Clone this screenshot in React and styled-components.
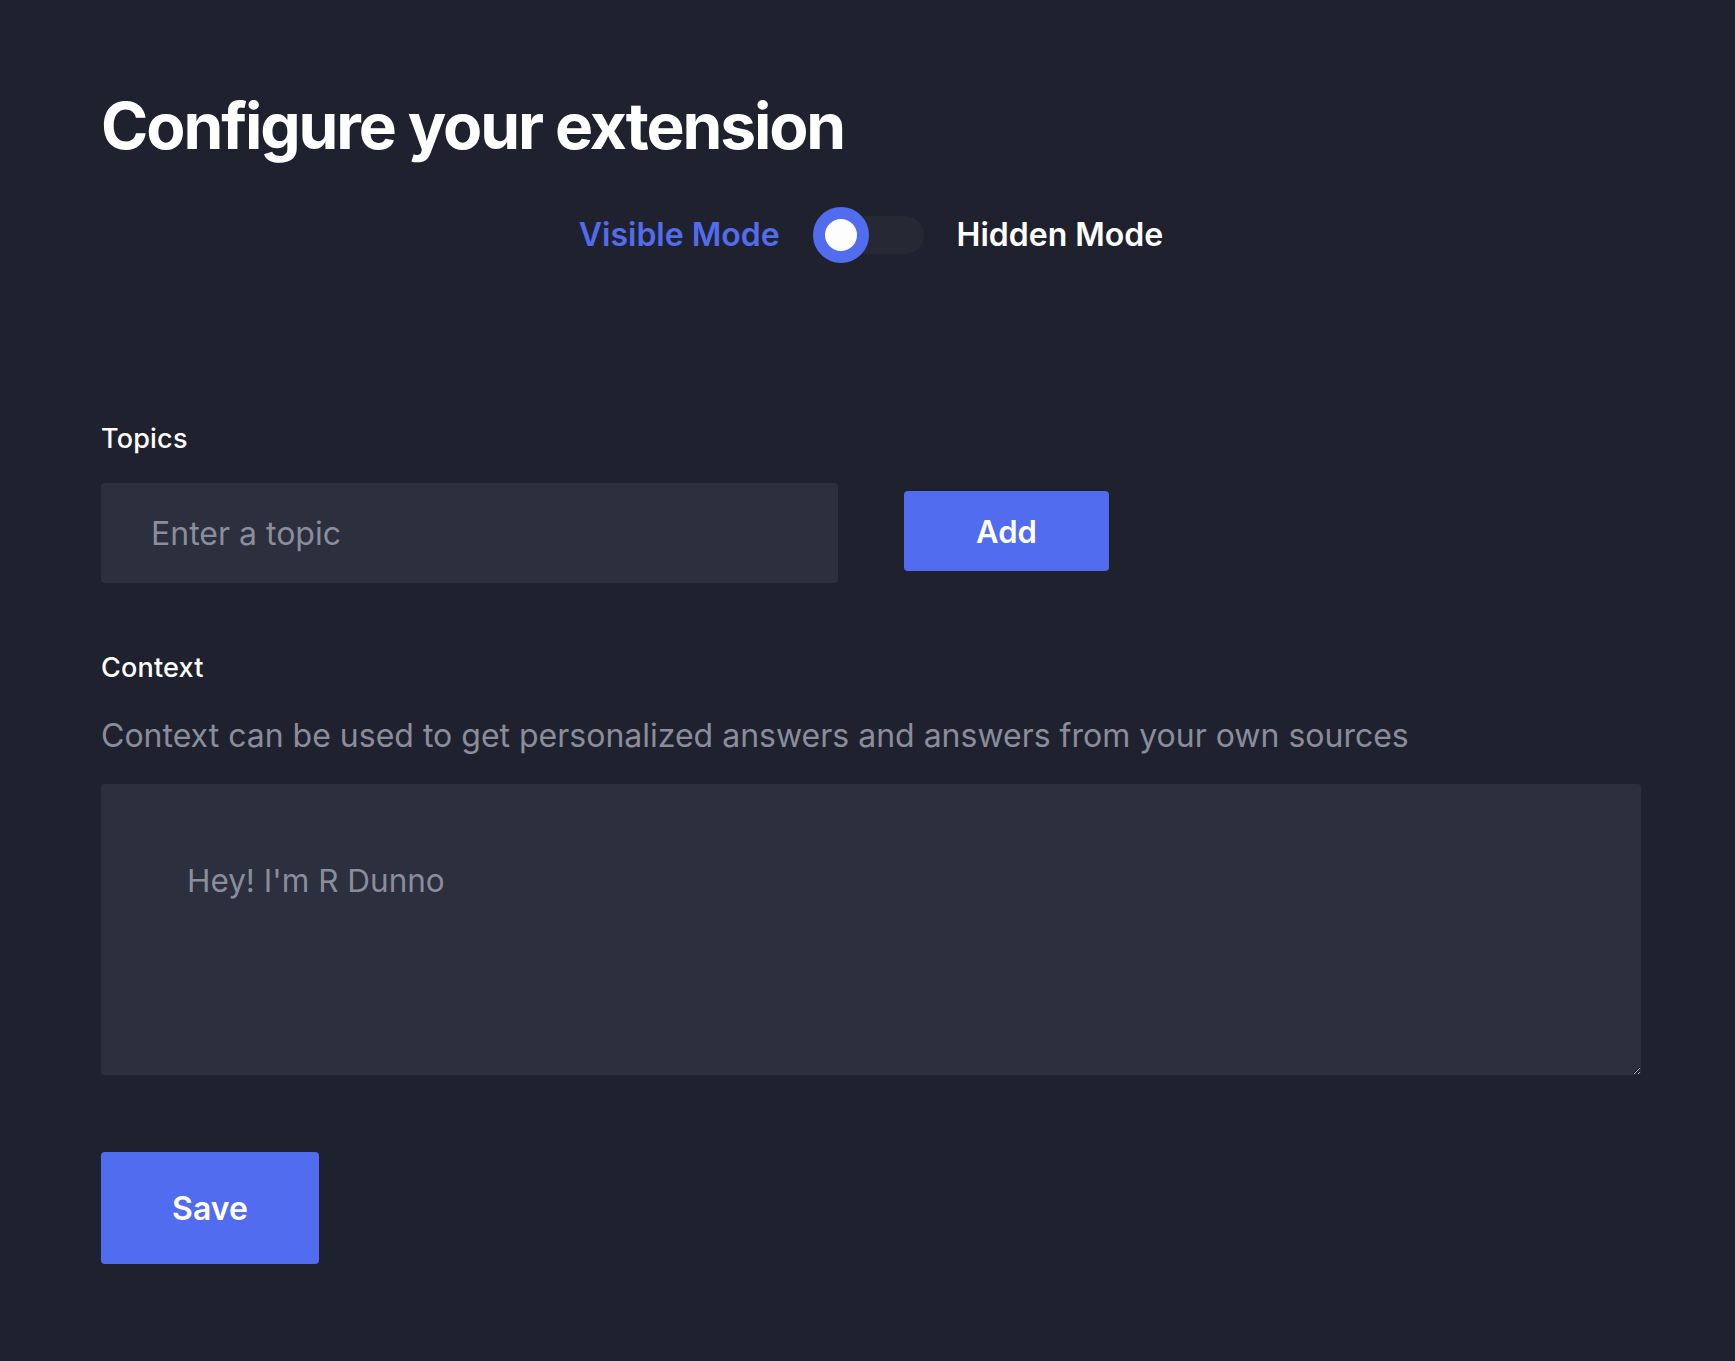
import React, { useState } from "react";
import styled, { createGlobalStyle } from "styled-components";

const GlobalStyle = createGlobalStyle`
  html, body {
    margin: 0;
    padding: 0;
    background: #1f222e;
  }
  body {
    font-family: Inter, "Noto Sans", sans-serif;
    color: #ffffff;
  }
`;

const App = () => {
  const [hidden, setHidden] = useState(false);
  const [topic, setTopic] = useState("");
  const [context, setContext] = useState("Hey! I'm R Dunno");

  return (
    <Page>
      <GlobalStyle />
      <Title>Configure your extension</Title>
      <ModeRow>
        <ModeLabel active={!hidden}>Visible Mode</ModeLabel>
        <Switch onClick={() => setHidden(!hidden)}>
          <Track />
          <Knob on={hidden} />
        </Switch>
        <ModeLabel active={hidden}>Hidden Mode</ModeLabel>
      </ModeRow>

      <Label>Topics</Label>
      <TopicRow>
        <TopicInput
          placeholder="Enter a topic"
          value={topic}
          onChange={(e) => setTopic(e.target.value)}
        />
        <AddButton>Add</AddButton>
      </TopicRow>

      <ContextLabel>Context</ContextLabel>
      <Description>
        Context can be used to get personalized answers and answers from your
        own sources
      </Description>
      <ContextArea
        value={context}
        onChange={(e) => setContext(e.target.value)}
      />

      <SaveButton>Save</SaveButton>
    </Page>
  );
};

export default App;

const Page = styled.div`
  min-height: 1361px;
  box-sizing: border-box;
  padding: 88px 94px 60px 101px;
  background: #1f222e;
`;

const Title = styled.h1`
  margin: 0;
  font-size: 64px;
  line-height: 76px;
  font-weight: 700;
  color: #ffffff;
  letter-spacing: -2.1px;
`;

const ModeRow = styled.div`
  display: flex;
  align-items: center;
  justify-content: center;
  gap: 33px;
  margin-top: 43px;
  height: 56px;
`;

const ModeLabel = styled.span`
  font-size: 32px;
  line-height: 36px;
  font-weight: 600;
  color: ${(p) => (p.active ? "#526cec" : "#ffffff")};
`;

const Switch = styled.div`
  position: relative;
  width: 111px;
  height: 56px;
  cursor: pointer;
`;

const Track = styled.div`
  position: absolute;
  left: 0;
  top: 9px;
  width: 111px;
  height: 38px;
  border-radius: 19px;
  background: #262934;
`;

const Knob = styled.div`
  position: absolute;
  top: 0;
  left: ${(p) => (p.on ? "55px" : "0")};
  width: 32px;
  height: 32px;
  border-radius: 50%;
  background: #fdfdfe;
  border: 12px solid #516cec;
`;

const Label = styled.div`
  margin-top: 161px;
  font-size: 27px;
  line-height: 30px;
  font-weight: 500;
  letter-spacing: 0.2px;
  color: #ffffff;
`;

const ContextLabel = styled(Label)`
  margin-top: 70px;
`;

const TopicRow = styled.div`
  display: flex;
  align-items: flex-start;
  gap: 66px;
  margin-top: 29px;
`;

const TopicInput = styled.input`
  width: 737px;
  height: 100px;
  box-sizing: border-box;
  padding: 0 50px;
  border: none;
  outline: none;
  border-radius: 4px;
  background: #2c2f3d;
  color: #d8dae3;
  font-family: Inter, "Noto Sans", sans-serif;
  font-size: 32px;

  &::placeholder {
    color: #8a8d9b;
  }
`;

const BlueButton = styled.button`
  border: none;
  border-radius: 4px;
  background: #516cee;
  color: #ffffff;
  font-family: Inter, "Noto Sans", sans-serif;
  font-weight: 600;
  font-size: 31px;
  cursor: pointer;
`;

const AddButton = styled(BlueButton)`
  width: 205px;
  height: 80px;
  margin-top: 8px;
`;

const Description = styled.p`
  margin: 35px 0 0;
  font-size: 32px;
  line-height: 36px;
  font-weight: 400;
  color: #8a8d9b;
`;

const ContextArea = styled.textarea`
  display: block;
  width: 100%;
  height: 291px;
  box-sizing: border-box;
  margin-top: 30px;
  padding: 80px 84px 80px 86px;
  border: none;
  outline: none;
  border-radius: 4px;
  background: #2c2f3d;
  color: #8a8d9b;
  font-family: Inter, "Noto Sans", sans-serif;
  font-size: 31.5px;
  line-height: 34px;
  resize: vertical;
`;

const SaveButton = styled(BlueButton)`
  display: block;
  margin-top: 77px;
  width: 218px;
  height: 112px;
  font-size: 32px;
`;
